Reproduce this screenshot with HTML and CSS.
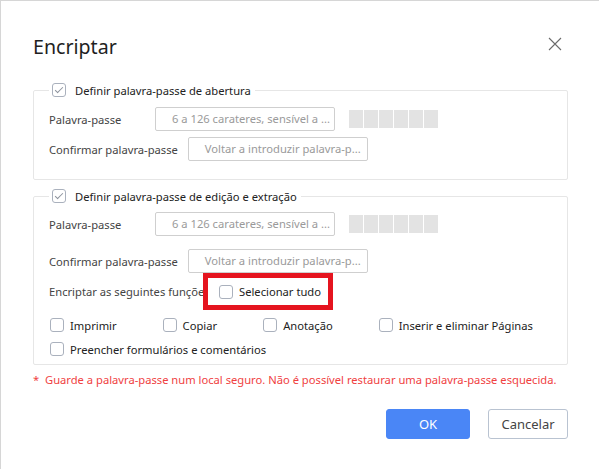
FILE: index.html
```html
<!doctype html>
<html>
	<head>
		<meta charset="utf-8">
		<title>Encriptar</title>
		<link rel="stylesheet" href="styles.css">
	</head>
	<body>
		<div class="dialog">
			<div class="dialog-header">
				<h1 class="dialog-title">Encriptar</h1>
				<button class="close-btn" type="button" aria-label="Fechar">
					<svg width="14" height="14" viewBox="0 0 14 14"><path d="M1 1L13 13M13 1L1 13" stroke="#6b6b6b" stroke-width="1.1" fill="none"/></svg>
				</button>
			</div>

			<fieldset class="group">
				<legend class="group-legend"><span class="check checked"></span>Definir palavra-passe de abertura</legend>
				<div class="row row-first">
					<span class="row-label">Palavra-passe</span>
					<span class="field">6 a 126 carateres, sensível a ...</span>
					<span class="strength"><i></i><i></i><i></i><i></i><i></i><i></i></span>
				</div>
				<div class="row">
					<span class="row-label">Confirmar palavra-passe</span>
					<span class="field">Voltar a introduzir palavra-p...</span>
				</div>
			</fieldset>

			<fieldset class="group group-edit">
				<legend class="group-legend"><span class="check checked"></span>Definir palavra-passe de edição e extração</legend>
				<div class="row row-first">
					<span class="row-label">Palavra-passe</span>
					<span class="field">6 a 126 carateres, sensível a ...</span>
					<span class="strength"><i></i><i></i><i></i><i></i><i></i><i></i></span>
				</div>
				<div class="row row-wide">
					<span class="row-label">Confirmar palavra-passe</span>
					<span class="field">Voltar a introduzir palavra-p...</span>
				</div>
				<div class="select-row">
					<span class="select-label">Encriptar as seguintes funções</span>
					<span class="select-all"><span class="check"></span>Selecionar tudo</span>
				</div>
				<div class="options">
					<span class="option"><span class="check"></span>Imprimir</span>
					<span class="option"><span class="check"></span>Copiar</span>
					<span class="option"><span class="check"></span>Anotação</span>
					<span class="option"><span class="check"></span>Inserir e eliminar Páginas</span>
				</div>
				<div class="options">
					<span class="option"><span class="check"></span>Preencher formulários e comentários</span>
				</div>
			</fieldset>

			<p class="note">*&nbsp; Guarde a palavra-passe num local seguro. Não é possível restaurar uma palavra-passe esquecida.</p>

			<div class="actions">
				<button class="btn btn-primary" type="button">OK</button>
				<button class="btn" type="button">Cancelar</button>
			</div>
		</div>
	</body>
</html>
```
FILE: styles.css
```css
html, body {
	margin: 0;
	padding: 0;
	background: #fff;
}

body {
	font-family: "Noto Sans", "Liberation Sans", sans-serif;
	font-size: 11.2px;
	color: #333;
}

.dialog {
	width: 599px;
	height: 469px;
	box-sizing: border-box;
	border-top: 1px solid #d6d6d6;
	border-left: 1px solid #d6d6d6;
	padding: 0 31px 0 32px;
}

.dialog-header {
	display: flex;
	justify-content: space-between;
	align-items: center;
	height: 60px;
	padding-top: 30px;
	box-sizing: border-box;
}

.dialog-title {
	margin: 0;
	font-size: 19.6px;
	font-weight: normal;
	color: #1f1f1f;
}

.close-btn {
	border: 0;
	background: none;
	padding: 0;
	margin: 0 6px 4px 0;
	width: 14px;
	height: 14px;
	display: flex;
}

/* password groups */
.group {
	margin: 21px 0 0;
	padding: 0 15px 18px;
	border: 1px solid #e6e6e6;
	border-radius: 2px;
	min-width: 0;
}

.group-edit {
	margin-top: 8px;
	padding-bottom: 7px;
}

.group-legend {
	display: flex;
	align-items: center;
	padding: 0 4px 0 3px;
	height: 16px;
	color: #222;
}

.group-legend .check {
	margin-right: 9px;
}

.row {
	display: flex;
	align-items: center;
	height: 24px;
	margin-top: 6px;
}

.row-first {
	margin-top: 9px;
}

.group-edit .row-first {
	margin-top: 8px;
}

.row-wide {
	margin-top: 13px;
}

.row-label {
	min-width: 96px;
	margin-right: 10px;
	color: #444;
	white-space: nowrap;
}

.field {
	width: 180px;
	height: 24px;
	box-sizing: border-box;
	border: 1px solid #cfcfcf;
	border-radius: 2px;
	padding: 0 4px 0 16px;
	line-height: 22px;
	color: #9a9a9a;
	white-space: nowrap;
	overflow: hidden;
}

.strength {
	display: flex;
	gap: 1px;
	margin-left: 14px;
}

.strength i {
	width: 14px;
	height: 18px;
	background: #e3e3e3;
}

/* permissions */
.select-row {
	display: flex;
	align-items: center;
}

.select-label {
	width: 154px;
	overflow: hidden;
	white-space: nowrap;
	color: #444;
}

.select-all {
	display: flex;
	align-items: center;
	width: 130px;
	height: 37px;
	box-sizing: border-box;
	border: 5px solid #e5141f;
	padding-left: 11px;
	background: #fff;
	color: #222;
}

.select-all .check,
.option .check {
	margin-right: 6px;
}

.options {
	display: flex;
	gap: 46px;
	height: 16px;
	margin-top: 7px;
	padding-left: 1px;
}

.options + .options {
	margin-top: 8px;
}

.option {
	display: flex;
	align-items: center;
	color: #222;
	white-space: nowrap;
}

.check {
	flex: none;
	width: 14px;
	height: 14px;
	box-sizing: border-box;
	border: 1px solid #aab1bd;
	border-radius: 3px;
	background: #fff;
	position: relative;
}

.check.checked::after {
	content: "";
	position: absolute;
	left: 4px;
	top: 1px;
	width: 3px;
	height: 7px;
	border: solid #8c929c;
	border-width: 0 1px 1px 0;
	transform: rotate(45deg);
}

.note {
	margin: 7px 0 0;
	line-height: 16px;
	color: #f0413f;
	white-space: nowrap;
}

.actions {
	display: flex;
	justify-content: flex-end;
	gap: 18px;
	margin-top: 21px;
}

.btn {
	height: 30px;
	width: 80px;
	border: 1px solid #b9c3d1;
	border-radius: 3px;
	background: #fff;
	font-family: inherit;
	font-size: 13px;
	color: #444;
	padding: 0;
}

.btn-primary {
	width: 84px;
	background: #4a86f6;
	border-color: #4a86f6;
	color: #fff;
}
```
